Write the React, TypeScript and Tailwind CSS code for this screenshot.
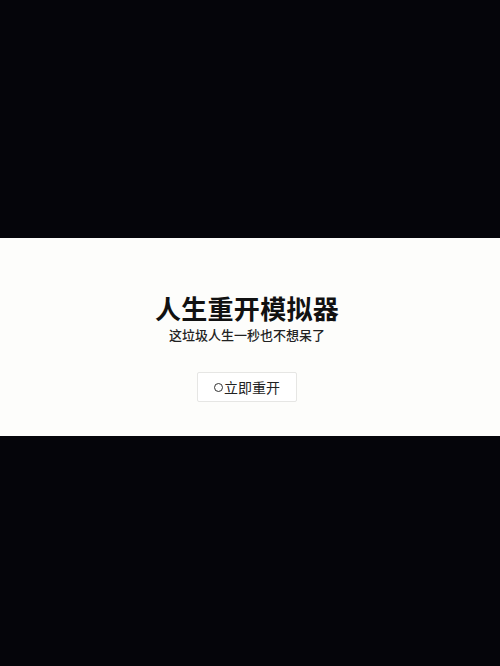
import React from 'react';

const App: React.FC = () => {
  return (
    <div className="flex h-[666px] w-[500px] flex-col bg-[#05050a] font-['Noto_Sans_CJK_SC',sans-serif]">
      <div className="h-[238px] shrink-0" />
      <div className="flex h-[198px] shrink-0 flex-col items-center bg-[#fdfdfb] pr-[6px] pt-[53px]">
        <h1 className="text-[26px] font-bold leading-[34px] tracking-[0.3px] text-[#111]">人生重开模拟器</h1>
        <p className="mt-[1px] text-[13px] font-medium leading-[18px] text-[#222]">这垃圾人生一秒也不想呆了</p>
        <button
          type="button"
          className="mt-[28px] flex h-[30px] w-[100px] items-center justify-center rounded-[2px] border border-[#e6e6e4] bg-white text-[14px] text-[#222]"
        >
          <span className="mr-[1px] inline-block h-[9px] w-[9px] rounded-full border-[1.5px] border-[#333]" />
          立即重开
        </button>
      </div>
      <div className="flex-1" />
    </div>
  );
};

export default App;
